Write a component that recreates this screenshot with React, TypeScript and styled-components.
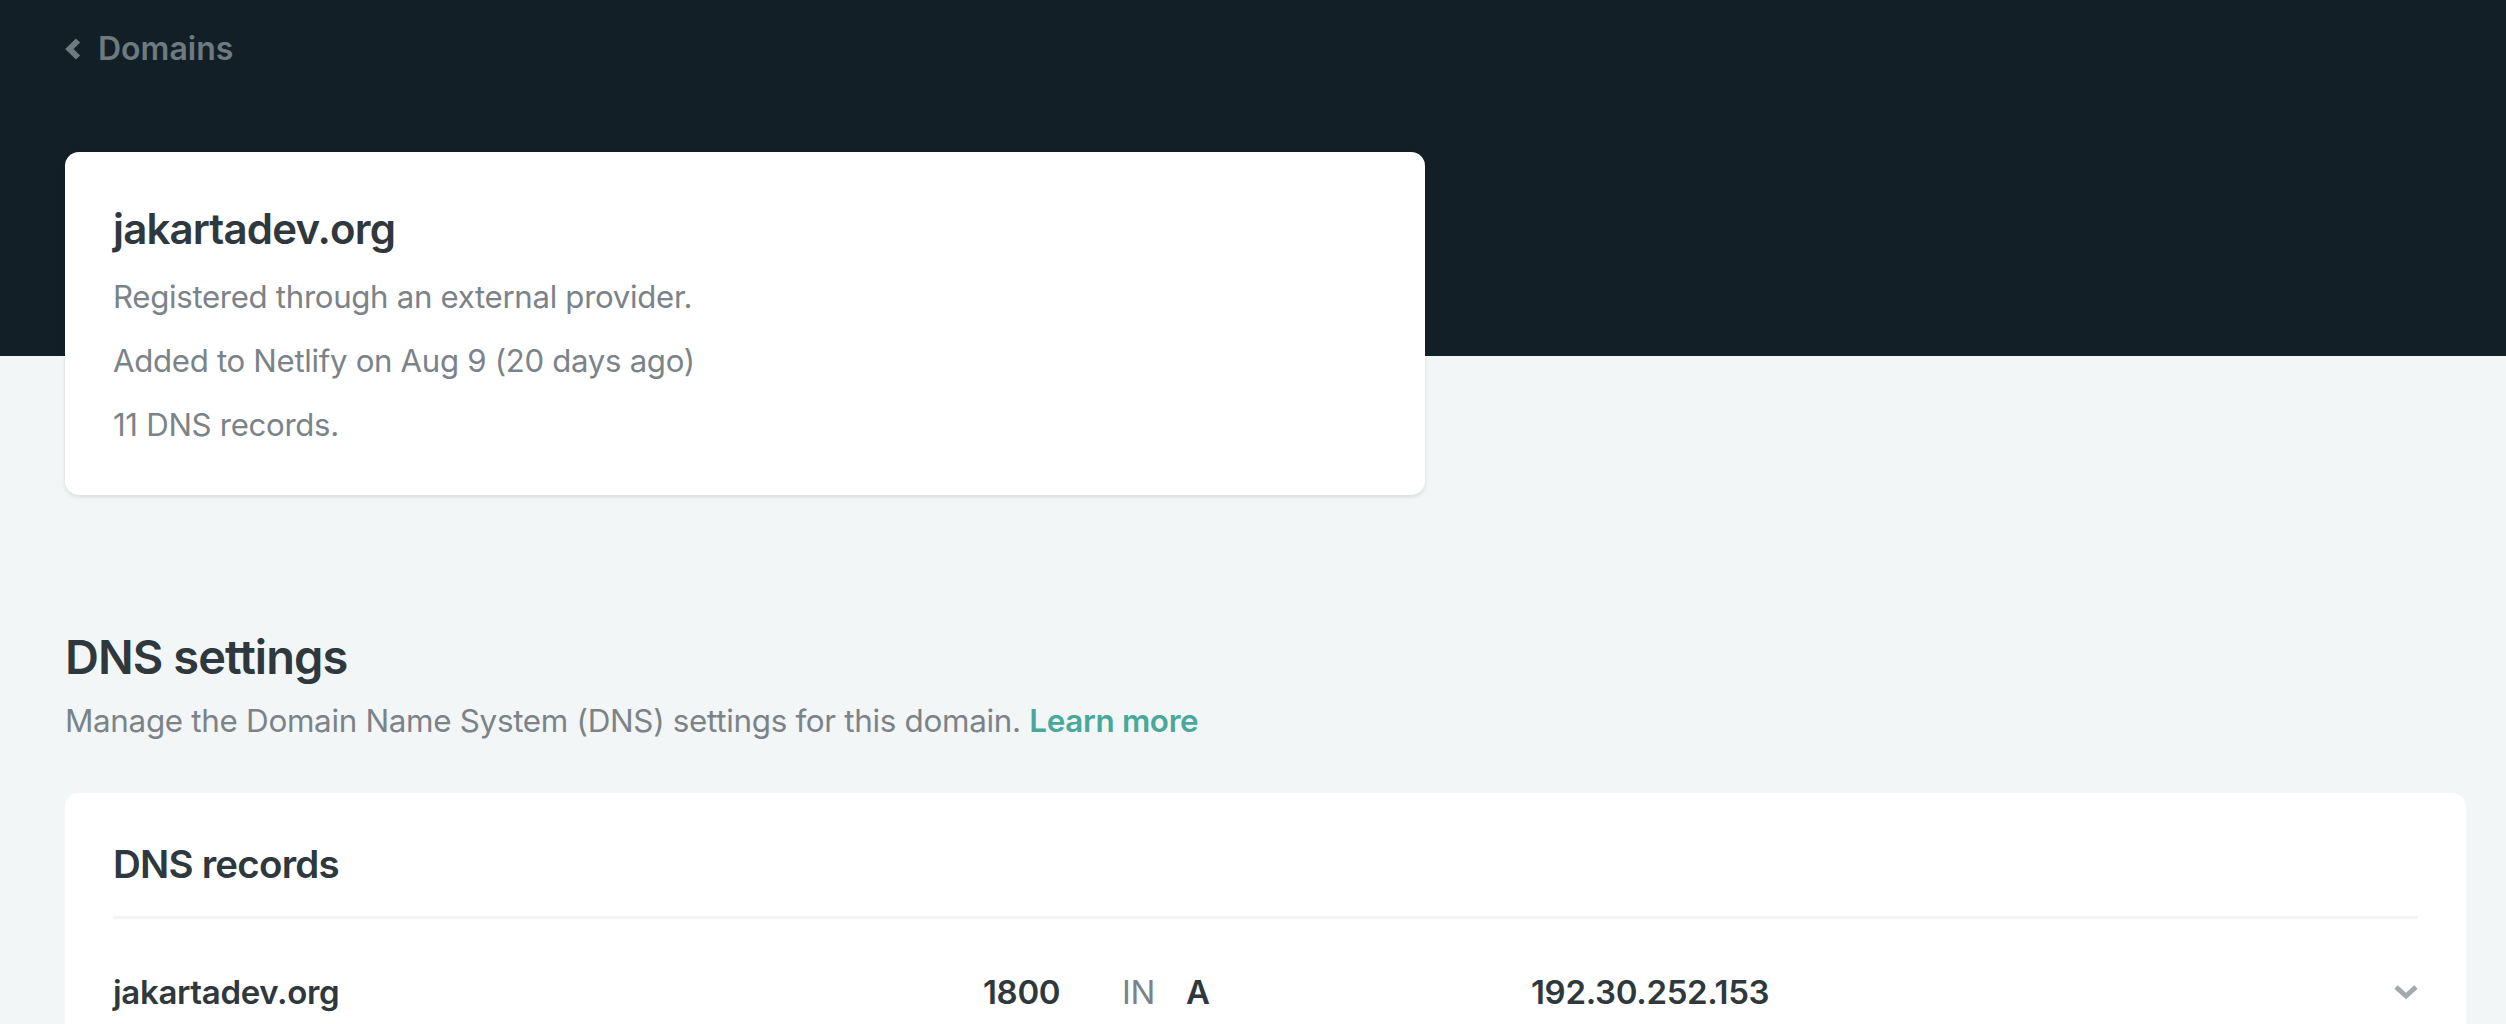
import React from 'react';
import styled, {createGlobalStyle} from "styled-components";

const GlobalStyle = createGlobalStyle`
    * {
        box-sizing: border-box;
    }
    body {
        margin: 0;
        background: #f3f6f7;
        font-family: Inter, 'Noto Sans', sans-serif;
        color: #2e383d;
    }
`

const records = [
    {name: 'jakartadev.org', ttl: '1800', cls: 'IN', type: 'A', value: '192.30.252.153'},
]

const ChevronLeft = () => (
    <svg width="16" height="22" viewBox="0 0 16 22">
        <polyline points="13,2.5 4.5,11 13,19.5" fill="none" stroke="#6d7b81" strokeWidth="6"/>
    </svg>
)

const ChevronDown = () => (
    <svg width="24" height="16" viewBox="0 0 24 16">
        <polyline points="2,3 12,12 22,3" fill="none" stroke="#a4a9ac" strokeWidth="5"/>
    </svg>
)

export default function App() {
    return (
        <>
            <GlobalStyle/>
            <Hero>
                <BackLink href="#">
                    <ChevronLeft/>
                    Domains
                </BackLink>
                <DomainCard>
                    <DomainTitle>jakartadev.org</DomainTitle>
                    <InfoLine>Registered through an external provider.</InfoLine>
                    <InfoLine>Added to Netlify on Aug 9 (20 days ago)</InfoLine>
                    <InfoLine>11 DNS records.</InfoLine>
                </DomainCard>
            </Hero>

            <Section>
                <SectionTitle>DNS settings</SectionTitle>
                <SectionText>
                    Manage the Domain Name System (DNS) settings for this domain. <LearnMore href="#">Learn more</LearnMore>
                </SectionText>

                <RecordsCard>
                    <RecordsTitle>DNS records</RecordsTitle>
                    {records.map(r => (
                        <RecordRow key={r.name + r.value}>
                            <Cell>{r.name}</Cell>
                            <Cell>{r.ttl}</Cell>
                            <Cell muted>{r.cls}</Cell>
                            <Cell>{r.type}</Cell>
                            <Cell>{r.value}</Cell>
                            <ChevronDown/>
                        </RecordRow>
                    ))}
                </RecordsCard>
            </Section>
        </>
    );
}

const Hero = styled.header`
    background: linear-gradient(to bottom, #131f26 356px, #f3f6f7 356px);
    padding: 29px 0 0 65px;
`

const BackLink = styled.a`
    display: flex;
    width: fit-content;
    align-items: center;
    gap: 17px;
    font-size: 32px;
    font-weight: 600;
    line-height: 40px;
    color: #6d7b81;
    text-decoration: none;
`

const DomainCard = styled.div`
    width: 1360px;
    margin-top: 83px;
    background: #fff;
    border-radius: 14px;
    box-shadow: 0 2px 4px rgba(20, 30, 35, 0.12);
    padding: 52px 48px 38px;
`

const DomainTitle = styled.h1`
    margin: 0 0 11px;
    font-size: 42px;
    line-height: 50px;
    font-weight: 600;
    letter-spacing: -0.02em;
    color: #2e383d;
`

const InfoLine = styled.p`
    margin: 0;
    font-size: 31.2px;
    line-height: 64px;
    color: #7b8388;
    letter-spacing: -0.01em;
`

const Section = styled.section`
    padding: 134px 40px 0 65px;
`

const SectionTitle = styled.h2`
    margin: 0 0 12px;
    font-size: 47px;
    line-height: 56px;
    font-weight: 600;
    letter-spacing: -0.02em;
    color: #2e383d;
`

const SectionText = styled.p`
    margin: 0 0 48px;
    font-size: 31.4px;
    line-height: 48px;
    color: #7b8388;
    letter-spacing: -0.01em;
`

const LearnMore = styled.a`
    color: #48a99b;
    font-weight: 600;
    text-decoration: none;
`

const RecordsCard = styled.div`
    background: #fff;
    border-radius: 14px 14px 0 0;
    padding: 46px 48px 0;
`

const RecordsTitle = styled.h3`
    margin: 0;
    padding-bottom: 27px;
    font-size: 38.5px;
    line-height: 50px;
    font-weight: 600;
    letter-spacing: -0.02em;
    border-bottom: 3px solid #f3f4f4;
`

const RecordRow = styled.div`
    display: grid;
    grid-template-columns: 870px 139px 64px 345px 1fr 24px;
    align-items: center;
    height: 146px;
`

const Cell = styled.span<{muted?: boolean}>`
    font-size: 33px;
    font-weight: ${p => p.muted ? 400 : 600};
    color: ${p => p.muted ? '#7b8388' : '#2e383d'};
    letter-spacing: -0.01em;
`
